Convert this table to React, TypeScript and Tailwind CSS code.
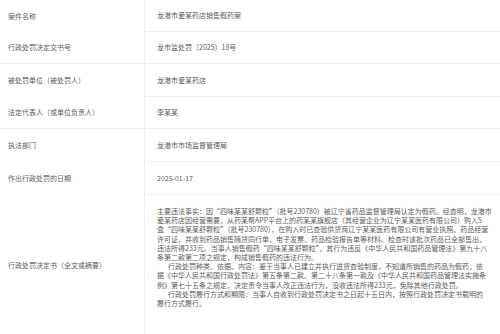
const rows: { label: string; value: string; h: string; leftBorder: boolean }[] = [
  { label: '案件名称', value: '龙港市爱某药店销售假药案', h: 'h-[32px]', leftBorder: false },
  { label: '行政处罚决定文书号', value: '龙市监处罚〔2025〕18号', h: 'h-[32px]', leftBorder: true },
  { label: '被处罚单位（被处罚人）', value: '龙港市爱某药店', h: 'h-[33px]', leftBorder: false },
  { label: '法定代表人（或单位负责人）', value: '李某某', h: 'h-[32px]', leftBorder: true },
  { label: '执法部门', value: '龙港市市场监督管理局', h: 'h-[33px]', leftBorder: false },
  { label: '作出行政处罚的日期', value: '2025-01-17', h: 'h-[33px]', leftBorder: false },
]

const summary: { text: string; indent?: boolean }[] = [
  { text: '主要违法事实：因“四味某某舒颗粒”（批号230780）被辽宁省药品监督管理局认定为假药。经查明，龙港市' },
  { text: '爱某药店因经营需要，从药某帮APP平台上的药某某旗舰店（其经营企业为辽宁某某医药有限公司）购入5' },
  { text: '盒“四味某某舒颗粒”（批号230780），在购入时已查验供货商辽宁某某医药有限公司有营业执照、药品经营' },
  { text: '许可证，并收到药品销售随货同行单、电子发票、药品检验报告单等材料。检查时该批次药品已全部售出，' },
  { text: '违法所得233元。当事人销售假药“四味某某舒颗粒”，其行为违反《中华人民共和国药品管理法》第九十八' },
  { text: '条第二款第二项之规定，构成销售假药的违法行为。' },
  { text: '行政处罚种类、依据、内容：鉴于当事人已建立并执行进货查验制度，不知道所销售的药品为假药，依', indent: true },
  { text: '据《中华人民共和国行政处罚法》第五条第二款、第二十八条第一款及《中华人民共和国药品管理法实施条' },
  { text: '例》第七十五条之规定，决定责令当事人改正违法行为，没收违法所得233元，免除其他行政处罚。' },
  { text: '行政处罚履行方式和期限：当事人自收到行政处罚决定书之日起十五日内，按照行政处罚决定书载明的', indent: true },
  { text: '履行方式履行。' },
]

export default function App() {
  return (
    <div className="h-[334px] w-[500px] overflow-hidden bg-white font-['Noto_Sans_CJK_SC','Noto_Sans',sans-serif] text-[7px] text-[#5c5c5c]">
      {rows.map((r) => (
        <div key={r.label} className={`flex ${r.h}`}>
          <div
            className={`flex w-[145px] shrink-0 items-center border-r border-[#ededed] pl-[8px] ${
              r.leftBorder ? 'border-b' : ''
            }`}
          >
            {r.label}
          </div>
          <div className="flex flex-1 items-center border-b border-[#ededed] pl-[12px]">{r.value}</div>
        </div>
      ))}
      <div className="flex h-[140px]">
        <div className="flex w-[145px] shrink-0 items-center border-r border-[#ededed] pl-[8px]">
          行政处罚决定书（全文或摘要）
        </div>
        <div className="flex-1 whitespace-nowrap pl-[12px] pt-[12px] leading-[9.2px]">
          {summary.map((l, i) => (
            <div key={i} className={l.indent ? 'pl-[11px]' : ''}>
              {l.text}
            </div>
          ))}
        </div>
      </div>
    </div>
  )
}
